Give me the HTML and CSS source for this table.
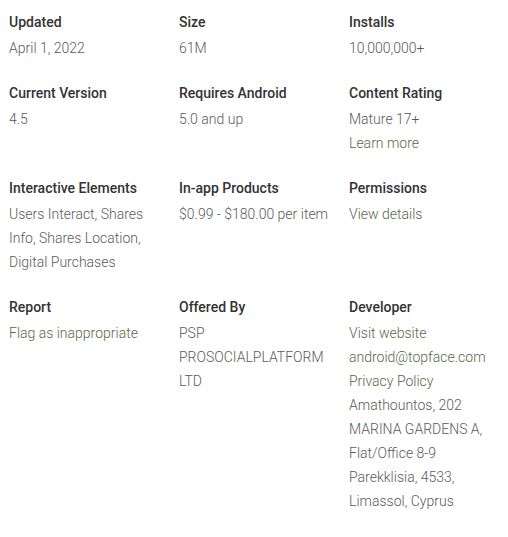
FILE: index.html
```html
<!DOCTYPE html>
<html>
<head>
<meta charset="utf-8">
<link rel="stylesheet" href="styles.css">
</head>
<body>
<div class="details">
  <div class="item"><div class="label">Updated</div><div class="value">April 1, 2022</div></div>
  <div class="item"><div class="label">Size</div><div class="value">61M</div></div>
  <div class="item"><div class="label">Installs</div><div class="value">10,000,000+</div></div>

  <div class="item"><div class="label">Current Version</div><div class="value">4.5</div></div>
  <div class="item"><div class="label">Requires Android</div><div class="value">5.0 and up</div></div>
  <div class="item"><div class="label">Content Rating</div><div class="value">Mature 17+<br><a class="link">Learn more</a></div></div>

  <div class="item"><div class="label">Interactive Elements</div><div class="value">Users Interact, Shares Info, Shares Location, Digital Purchases</div></div>
  <div class="item"><div class="label">In-app Products</div><div class="value">$0.99 - $180.00 per item</div></div>
  <div class="item"><div class="label">Permissions</div><div class="value"><a class="link">View details</a></div></div>

  <div class="item"><div class="label">Report</div><div class="value"><a class="link">Flag as inappropriate</a></div></div>
  <div class="item"><div class="label">Offered By</div><div class="value">PSP<br>PROSOCIALPLATFORM<br>LTD</div></div>
  <div class="item"><div class="label">Developer</div><div class="value"><a class="link">Visit website</a><br><a class="link">android@topface.com</a><br><a class="link">Privacy Policy</a><br>Amathountos, 202 MARINA GARDENS A, Flat/Office 8-9 Parekklisia, 4533, Limassol, Cyprus</div></div>
</div>
</body>
</html>
```
FILE: styles.css
```css
html, body {
  margin: 0;
  padding: 0;
  background: #ffffff;
}
.details {
  font-family: Roboto, "Liberation Sans", sans-serif;
  font-size: 14px;
  padding: 10px 0 0 9px;
  display: grid;
  grid-template-columns: 170px 170px 150px;
  row-gap: 21px;
  align-items: start;
}
.item {
  padding-right: 12px;
}
.label {
  font-weight: 500;
  color: #333333;
  line-height: 24px;
}
.value {
  margin-top: 2px;
  font-weight: 300;
  color: #5a5a5a;
  line-height: 24px;
}
.link {
  color: #56684a;
  text-decoration: none;
}
```
